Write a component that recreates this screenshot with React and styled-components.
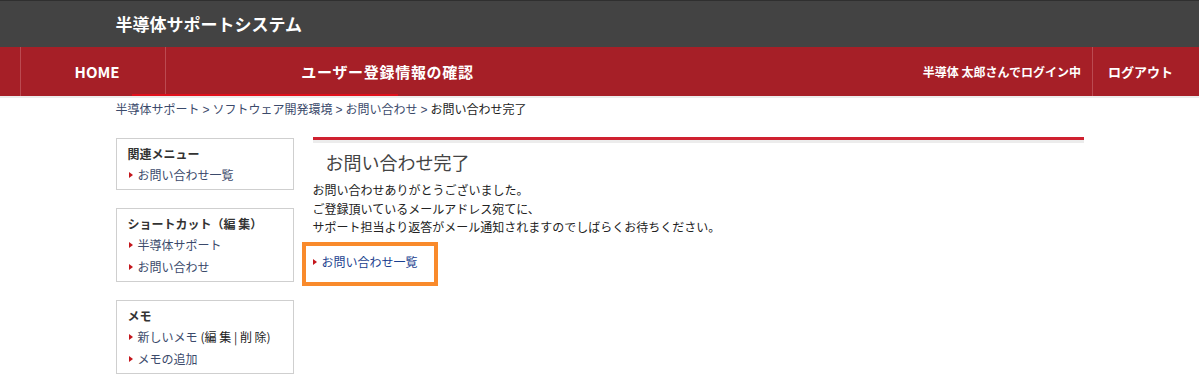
import React from 'react';
import styled, { createGlobalStyle } from 'styled-components';

const GlobalStyle = createGlobalStyle`
  body {
    margin: 0;
    background: #fff;
    font-family: "Noto Sans CJK JP", "Liberation Sans", sans-serif;
    color: #222;
  }
`;

const Container = styled.div`
  width: 968px;
  margin: 0 auto;
`;

const Header = styled.header`
  height: 47px;
  box-sizing: border-box;
  background: #434343;
  border-top: 1px solid #2f2f2f;
`;

const SiteTitle = styled.div`
  font-size: 17px;
  font-weight: 700;
  color: #fff;
  line-height: 45px;
`;

const Nav = styled.nav`
  position: relative;
  display: flex;
  align-items: stretch;
  height: 49px;
  background: #a61f27;
  border-bottom: 2px solid #ececec;
  padding: 0 11px 0 20px;
`;

const NavCell = styled.div`
  display: flex;
  align-items: center;
  justify-content: center;
  box-sizing: border-box;
  width: ${p => p.$width}px;
  padding-left: ${p => p.$shift || 0}px;
  color: #fff;
  font-weight: 700;
  font-size: ${p => p.$size || 15}px;
  letter-spacing: ${p => p.$spacing || 0}px;
  border-left: ${p => (p.$divider ? '1px solid #bb4a51' : 'none')};
  border-right: ${p => (p.$dividerRight ? '1px solid #bb4a51' : 'none')};
`;

const NavSpacer = styled.div`
  flex: 1;
`;

const UserInfo = styled.div`
  display: flex;
  align-items: center;
  padding-right: 11px;
  color: #fff;
  font-size: 12px;
  font-weight: 700;
`;

const ActiveBar = styled.span`
  position: absolute;
  left: 132px;
  bottom: 0;
  width: 266px;
  height: 2px;
  background: #e0101c;
`;

const Breadcrumb = styled.div`
  font-size: 12px;
  line-height: 18px;
  padding-top: 2px;
  color: #3b4a6b;
`;

const Current = styled.span`
  color: #222;
`;

const Sep = styled.span`
  margin: 0 3px;
  font-family: "Liberation Sans", sans-serif;
`;

const Body = styled.div`
  display: flex;
  align-items: flex-start;
  gap: 19px;
  margin-top: 18px;
`;

const Sidebar = styled.aside`
  width: 178px;
  flex-shrink: 0;
  margin-top: 1px;
  display: flex;
  flex-direction: column;
  gap: 18px;
`;

const Box = styled.div`
  border: 1px solid #cfcfcf;
  padding: 5px 10px 3px 11px;
`;

const BoxTitle = styled.div`
  font-size: 12px;
  font-weight: 700;
  line-height: 20px;
  color: #333;
`;

const Item = styled.div`
  display: flex;
  align-items: center;
  font-size: 12px;
  line-height: 22px;
  color: ${p => p.$color || '#3b4a6b'};
  padding-left: ${p => p.$indent ?? 1}px;

  &::before {
    content: '';
    flex-shrink: 0;
    border-left: 4px solid #c4161c;
    border-top: 3px solid transparent;
    border-bottom: 3px solid transparent;
    margin-right: 5px;
  }
`;

const Plain = styled.span`
  color: #222;
  margin-left: 3px;
`;

const Main = styled.main`
  flex: 1;
  border-top: 3px solid #cf2130;
`;

const Underline = styled.div`
  height: 3px;
  background: #ececec;
`;

const Heading = styled.h1`
  margin: 7px 0 0;
  padding-left: 13px;
  font-size: 18px;
  font-weight: 400;
  line-height: 24px;
  color: #444;
`;

const Message = styled.p`
  margin: 7px 0 0;
  font-size: 12px;
  line-height: 18.5px;
  color: #222;
`;

const Highlight = styled.div`
  width: 121px;
  margin: 5px 0 0 -11px;
  border: 4px solid #f98a2b;
  padding: 5px 0 9px 7px;
`;

const App = () => {
  return (
    <>
      <GlobalStyle />
      <Header>
        <Container>
          <SiteTitle>半導体サポートシステム</SiteTitle>
        </Container>
      </Header>
      <Nav>
        <NavCell $width={146} $shift={8} $divider $dividerRight>HOME</NavCell>
        <NavCell $width={443} $spacing={0.7}>ユーザー登録情報の確認</NavCell>
        <NavSpacer />
        <UserInfo>半導体 太郎さんでログイン中</UserInfo>
        <NavCell $width={96} $size={13} $divider>ログアウト</NavCell>
        <ActiveBar />
      </Nav>
      <Container>
        <Breadcrumb>
          半導体サポート<Sep>&gt;</Sep>ソフトウェア開発環境<Sep>&gt;</Sep>お問い合わせ<Sep>&gt;</Sep>
          <Current>お問い合わせ完了</Current>
        </Breadcrumb>
        <Body>
          <Sidebar>
            <Box>
              <BoxTitle>関連メニュー</BoxTitle>
              <Item>お問い合わせ一覧</Item>
            </Box>
            <Box>
              <BoxTitle>ショートカット（編 集）</BoxTitle>
              <Item>半導体サポート</Item>
              <Item>お問い合わせ</Item>
            </Box>
            <Box>
              <BoxTitle>メモ</BoxTitle>
              <Item>
                新しいメモ<Plain>(編 集 | 削 除)</Plain>
              </Item>
              <Item>メモの追加</Item>
            </Box>
          </Sidebar>
          <Main>
            <Underline />
            <Heading>お問い合わせ完了</Heading>
            <Message>
              お問い合わせありがとうございました。
              <br />
              ご登録頂いているメールアドレス宛てに、
              <br />
              サポート担当より返答がメール通知されますのでしばらくお待ちください。
            </Message>
            <Highlight>
              <Item $color="#1b3f8f" $indent={0}>お問い合わせ一覧</Item>
            </Highlight>
          </Main>
        </Body>
      </Container>
    </>
  );
};

export default App;
